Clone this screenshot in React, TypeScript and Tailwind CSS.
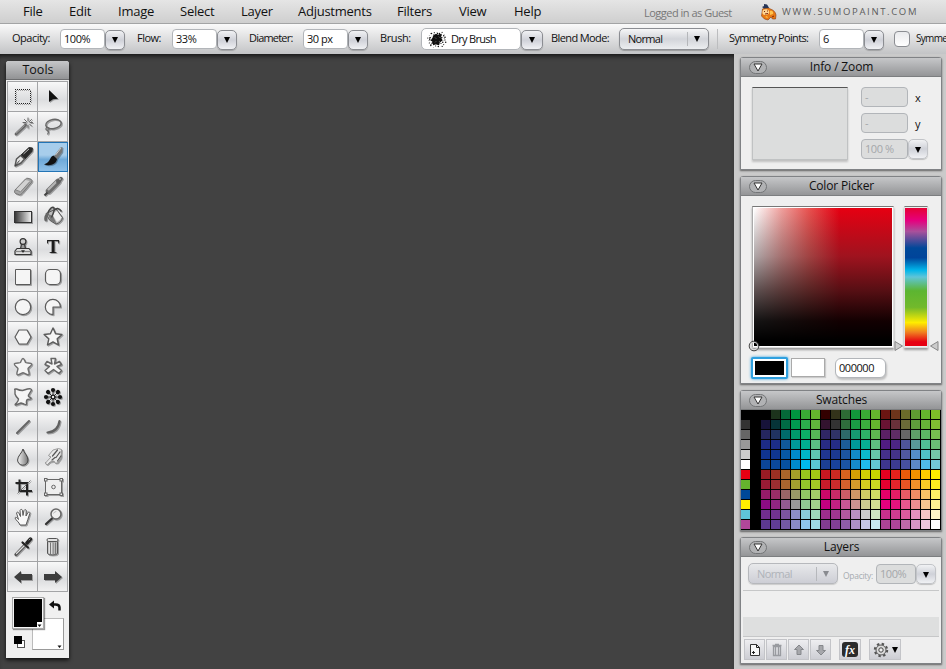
import { ReactNode } from "react";
import clsx from "clsx";

const menuItems = [
    { label: "File", width: "w-[46px]" },
    { label: "Edit", width: "w-[49px]" },
    { label: "Image", width: "w-[62px]" },
    { label: "Select", width: "w-[61px]" },
    { label: "Layer", width: "w-[57px]" },
    { label: "Adjustments", width: "w-[99px]" },
    { label: "Filters", width: "w-[62px]" },
    { label: "View", width: "w-[55px]" },
    { label: "Help", width: "w-[130px]" },
];

// one line per swatch row, 20 colors each
const swatchRows = [
    "000000 000000 000000 1c331c 056839 009540 3aaa35 65b32e 330000 33331a 2d6a35 12973b 3aaa35 65b32e 6b1512 6d351b 6b6b2a 5f9c32 65b32e 7ebc28",
    "333333 000000 17133a 063438 006a45 009a50 2bac4c 60b33c 33132f 333333 2f6c3c 1a9c45 3bac3e 65b32e 691333 69313a 6a6a38 5f9d3c 66b238 80bb32",
    "666666 000000 25265f 203360 006a6a 00996b 0cae66 56b657 302664 303366 2d6969 169970 2eaf67 5eb650 5b2064 5f2c65 666666 5f9f68 5cb664 76bd50",
    "999999 000000 1d2b85 1c2d87 10599a 009999 00ad90 5bbd83 282b83 252c85 1c5d98 009999 07ae94 5ebd80 511c82 4c2584 4f559a 599999 51bd96 6abb75",
    "cccccc 000000 10348f 10368f 0758a5 0089cb 00b4c7 5fc3b0 203690 1c398f 1c55a0 128ac8 0cb8cc 66c4a8 45308a 443388 5158a0 548dca 50bfc4 74c5a6",
    "ffffff 000000 0c4698 0b499b 0751a0 008ace 00b7ee 5ac5d4 1c3f94 19429b 1b54a3 168acb 20baed 63c5d3 3e368d 3c3b90 4750a0 5c88c6 50baea 73c8d8",
    "e60012 000000 991b24 9c3023 a9652a a59f29 98c31e a2c915 c91721 cb2922 d7621f d5a005 d2cf05 c8d600 e60020 e7211c eb5b0b f39200 ffcc00 ffed00",
    "65b32e 000000 991b35 9c2e31 a8652f a2a030 94c32b a4ca25 ca1b2a cb2b2c d6602d d59b2b d6ce20 cbd922 e60030 e4242b e95424 f2912a facb26 ffec20",
    "004899 000000 961b68 9a2d67 9a6566 9a9a67 92c564 a4cd68 cb0868 ca2a67 ce5c66 cf9766 d0cc65 d1dc65 e60068 e51d65 e85b65 f08c65 f8c166 fff066",
    "ffed00 000000 8b0c83 912581 935a92 999999 91ca94 a2d18b c20080 c12082 ca5795 ce9391 cecc91 d4df94 e6007e e5137d e8578d ee8d91 f7c491 fff294",
    "5fc5d8 000000 712e8e 71338f 7c54a0 8c8dc7 8accdb 9ed7ba 9d2d8c a0368f b2589e b88fc0 cccccc cfe5c1 ca308c cf3c8f dc5b9d e591bd f5c3c3 fff5c8",
    "b1479a 000000 5c3990 603d96 7359a4 898ac5 8ec4ec 9edbe5 823c90 813f96 8e5ca6 ad8fc5 c4c5e6 c9eaf0 ab4396 ae4599 be69a7 d796c3 edc4dc ffffff",
];

const outline = { stroke: "#5a5a5a", strokeWidth: 1.2, fill: "#f5f5f5", strokeLinejoin: "round" as const };

const tools: { name: string; icon: ReactNode }[] = [
    { name: "marquee", icon: <path d="M7 7.500h16M7 21.500h16M7.500 9v12M22.500 9v12" fill="none" stroke="#222" strokeWidth="1" strokeDasharray="1 1" shapeRendering="crispEdges" /> },
    { name: "move", icon: <path d="M11 8v12l4-2.800 5-.4z" fill="#111" /> },
    {
        name: "wand",
        icon: (
            <g fill="none" strokeLinecap="round">
                <path d="M8 22 17.500 13" stroke="#666" strokeWidth="2.800" />
                <path d="m8.300 21 8-7.500" stroke="#bbb" strokeWidth=".8" />
                <path d="M20 6v3M20 13v3M15 10.500h3M22 10.500h2.500M16.500 7.500l2 2M23.500 7.500l-2 2M23.500 14l-2-2" stroke="#666" strokeWidth="1" />
            </g>
        ),
    },
    {
        name: "lasso",
        icon: (
            <g fill="none" stroke="#666" strokeWidth="1.500">
                <ellipse cx="15.500" cy="12" rx="7.800" ry="4.600" transform="rotate(-10 15.500 12)" />
                <path d="M9 15c-2 2-1 3.500 1 3 2-.5 1.500-2.500-.5-2.500M9.500 18c1.500 1.500 1 3 0 4.500" strokeWidth="1.200" />
            </g>
        ),
    },
    {
        name: "pen",
        icon: (
            <g strokeLinejoin="round">
                <path d="m13 13 8-7.500 3.500.5-.5 3.500-7 7.500z" fill="#2a2a2a" stroke="#333" />
                <path d="m7 24 1.500-7 4-3.500 4 3.500-3.500 4z" fill="#e2e2e2" stroke="#555" strokeWidth="1.400" />
                <path d="m7 24 4.500-5.500" stroke="#444" />
                <path d="m15.500 12 5.500-5" stroke="#bbb" />
            </g>
        ),
    },
    {
        name: "brush",
        icon: (
            <g>
                <path d="m16 14 6.500-8.500 2-.5-.3 5-5.700 7.500z" fill="#777" />
                <path d="m17.500 13 5.500-7" stroke="#ccc" />
                <path d="M15.500 13.500c-3 .8-3 4-5 6-1.300 1.600-2.500 2-4.500 3 6.500 2 12.500-.5 13-5.500z" fill="#111" />
            </g>
        ),
    },
    {
        name: "eraser",
        icon: (
            <g strokeLinejoin="round">
                <path d="m7 18 10.500-11q1-1 2.500-.7l3 .9q1.300.8.8 2.800L14 21.500q-1.200 1.500-2.500 1.300L7.500 21.500q-1.700-1-.5-3.500z" fill="#a5a5a5" stroke="#777" />
                <path d="m8 17.500 9.500-9.500 4.500 1-10 11z" fill="#d2d2d2" />
                <path d="m12 20.500 10-11M8 18l4 1.500" stroke="#858585" fill="none" />
            </g>
        ),
    },
    {
        name: "pencil",
        icon: (
            <g>
                <path d="m10.500 19 9.500-9.500" stroke="#6c6c6c" strokeWidth="5.500" strokeLinecap="round" />
                <path d="m10 18 8.500-8.500" stroke="#b5b5b5" strokeWidth="2.300" />
                <path d="m20 10 3-3.500" stroke="#606060" strokeWidth="3.500" strokeLinecap="round" />
                <path d="m21.500 7.500 1-1" stroke="#ddd" strokeWidth="1.500" />
                <path d="m6.500 23.500 3-3" stroke="#444" strokeWidth="2.200" />
            </g>
        ),
    },
    { name: "gradient", icon: <rect x="6.500" y="9.500" width="17" height="11" fill="url(#gradTool)" stroke="#333" /> },
    {
        name: "bucket",
        icon: (
            <g strokeLinejoin="round">
                <path d="M8 11.500 18 7l6.500 8.500q-1 5-6.500 6.500l-6.500-4z" fill="#bbb" stroke="#555" />
                <path d="m14 12 5-3 4.500 6.500q-1 3-4.500 4.500z" fill="#eee" />
                <path d="m10 12 5 2 3.500 7.500-6-3z" fill="#777" />
                <path d="M9 13c3-8 6-8.500 7-7 1 2-1 6-2.500 9.500" fill="none" stroke="#444" strokeWidth="1.500" />
                <path d="M16 8.500c2.500-3 5-2.500 7.500 1" fill="none" stroke="#444" strokeWidth="1.500" />
                <path d="M10 10c-3 2-4.500 5-3.500 8.500 1 1.500 2.500 1 2.500-1 0-2 .5-3.500 2-5z" fill="#666" />
            </g>
        ),
    },
    {
        name: "stamp",
        icon: (
            <g stroke="#333" strokeWidth="1.200">
                <path d="M13.500 12h3l1 5h-5z" fill="#999" />
                <circle cx="15" cy="9.500" r="2.900" fill="#ccc" />
                <path d="M9 16.500h12l2 2.500v3.500H7V19z" fill="#ddd" strokeLinejoin="round" />
                <path d="M7.500 19.500h15" stroke="#888" />
                <path d="M13.500 18.500h3L15 20.500z" fill="#111" strokeWidth=".5" />
            </g>
        ),
    },
    { name: "text", icon: <text x="15" y="21" textAnchor="middle" className="font-['Liberation_Serif',serif] text-[19px] font-bold" fill="#1c1c1c">T</text> },
    { name: "square", icon: <rect x="7.500" y="7.500" width="15" height="15" {...outline} strokeWidth="1" /> },
    { name: "rounded", icon: <rect x="7.500" y="7.500" width="15" height="15" rx="4.500" {...outline} /> },
    { name: "ellipse", icon: <circle cx="15" cy="15" r="7.700" {...outline} /> },
    { name: "pie", icon: <path d="M15 15h7.500A7.600 7.600 0 1 0 15 22.600z" {...outline} /> },
    { name: "polygon", icon: <path d="M11 8h8l4 7-4 7h-8l-4-7z" {...outline} /> },
    { name: "star", icon: <path d="m15 6 2.600 5.800 6.300.7-4.700 4.300 1.300 6.200L15 19.900 9.500 23l1.300-6.200-4.700-4.300 6.300-.7z" {...outline} strokeWidth="1.400" /> },
    { name: "smoothstar", icon: <path d="M15 6.500c1 0 1.200 1 2.500 4 .4.8 5.800 0 6.200 1.500.3 1.500-3.500 3.500-3.700 4.700-.1 1.200 2.200 5 .7 6-1.200.8-4.500-2-5.700-2s-4.500 2.800-5.700 2c-1.500-1 .8-4.800.7-6-.2-1.200-4-3.200-3.700-4.700.4-1.500 5.800-.7 6.200-1.500 1.300-3 1.500-4 2.500-4z" {...outline} stroke="#707070" strokeWidth="1.400" /> },
    { name: "asterisk", icon: <path d="M13 6.500h4.500l-1 5.500 5-2.500 2 3-4.500 2 4.500 4-2.500 3-5.500-4-5.500 4-3-3 4.500-4-4.500-2 2-3 5 2.500z" {...outline} stroke="#666" strokeWidth="1.400" /> },
    { name: "freeform", icon: <path d="M7 8q-1-1.500 1.500-1 3 1.500 6 1.500l5-1.500q4-.8 4 1l-3 5q-.5 2 2 2.500 2 1.500-3 2-1.500.5-1 4 0 2-2.500.5l-3-1-5.500 2q-1-.5 1-2 2-2 2-4-3-3-3.500-5z" {...outline} stroke="#666" strokeWidth="1.400" /> },
    {
        name: "symmetry",
        icon: (
            <g fill="#111">
                <circle cx="15" cy="15" r="2.500" />
                <circle cx="15" cy="15" r="1.200" fill="#eee" />
                {[0, 45, 90, 135, 180, 225, 270, 315].map((angle) => (
                    <g key={angle} transform={`rotate(${angle} 15 15)`}>
                        <circle cx="15" cy="8" r="2.100" />
                        <path d="M15 9v4" stroke="#111" strokeWidth=".8" />
                    </g>
                ))}
            </g>
        ),
    },
    { name: "line", icon: <path d="M9 21 21 9" stroke="#666" strokeWidth="2" strokeLinecap="round" /> },
    { name: "curve", icon: <path d="M9.500 20.500C17 20 20.500 16 21.500 9" fill="none" stroke="#606060" strokeWidth="2.200" strokeLinecap="round" /> },
    { name: "blur", icon: <path d="M15 7c1 4 5 7 5 11a5.200 5.200 0 0 1-10.400 0C9.600 14 14 11 15 7z" fill="url(#dropFill)" stroke="#444" /> },
    {
        name: "smudge",
        icon: (
            <g strokeLinejoin="round" strokeLinecap="round">
                <path d="m7.500 21 5.500-6-2.500-1.500L15 8l5.500-1.500 3 1L23 16l-3.500 5H17l-1-2-4 1-2.500 2.500q-2 .5-2-1.500z" fill="#e8e8e8" stroke="#8a8a8a" strokeWidth=".8" />
                <path d="M19.500 8 14.500 14M22 10l-4 5.500M14 18l3-2.500M23 14l-3.500 5" stroke="#555" fill="none" strokeWidth="1.200" />
            </g>
        ),
    },
    {
        name: "crop",
        icon: (
            <g fill="none" stroke="#222" strokeWidth="2">
                <path d="M7.500 11H19v12.500M11.500 7.500v11.500H24" />
                <path d="m9.500 21.500 13-13" strokeWidth=".8" stroke="#555" />
            </g>
        ),
    },
    {
        name: "transform",
        icon: (
            <g fill="#eee" stroke="#666">
                <rect x="7.500" y="7.500" width="16" height="15" />
                <circle cx="15.500" cy="15" r="1.800" />
                <rect x="6.500" y="6.500" width="2.500" height="2.500" />
                <rect x="22" y="6.500" width="2.500" height="2.500" />
                <rect x="6.500" y="21" width="2.500" height="2.500" />
                <rect x="22" y="21" width="2.500" height="2.500" />
            </g>
        ),
    },
    {
        name: "hand",
        icon: (
            <path
                d="M12 23c-1-3-4-4.500-5-7 .5-1.500 2-.5 3.500 1.500L8.500 11c.5-1.500 2-1 2.500.5l1.500 3L12 8.500c.5-1.500 2-1.500 2.500 0l.5 5 1-5c.8-1.500 2.300-1 2.200.5l-.2 5 2-3.500c1-1 2.200-.5 1.800 1l-2 6-1.800 5.500z"
                fill="#f8f8f8" stroke="#5a5a5a" strokeLinejoin="round"
            />
        ),
    },
    {
        name: "zoom",
        icon: (
            <g>
                <path d="m8 22 6-5.500" stroke="#333" strokeWidth="2.300" strokeLinecap="round" />
                <circle cx="18" cy="12" r="5" fill="#eee" stroke="#666" strokeWidth="1.500" />
                <path d="M15.500 11.500q.8-2 2.800-2" stroke="#bbb" fill="none" />
            </g>
        ),
    },
    {
        name: "eyedropper",
        icon: (
            <g strokeLinecap="round">
                <path d="m8 22.500 8.500-9" stroke="#555" strokeWidth="3.200" />
                <path d="m8.500 21.500 8-8" stroke="#ddd" strokeWidth="1.200" />
                <path d="m19 11 3.500-4" stroke="#222" strokeWidth="3.500" />
                <path d="m14.500 10.500 5.500 5" stroke="#222" strokeWidth="2.200" />
                <path d="m21 8 1-1" stroke="#999" />
            </g>
        ),
    },
    {
        name: "clear",
        icon: (
            <g stroke="#555">
                <path d="M9.500 9.500h10v12q-1 1.500-5 1.500t-5-1.500z" fill="#bbb" />
                <path d="M12.500 10.500v12M15 10.500v12M17.500 10.500v12" stroke="#777" />
                <path d="M11.300 11v10.500M13.800 11v11" stroke="#eee" strokeWidth=".9" />
                <rect x="9" y="6.500" width="11" height="3" rx="1.500" fill="#e2e2e2" />
            </g>
        ),
    },
    { name: "undo", icon: <path d="m6 15 7-6v3h11v6H13v3z" fill="#3d3d3d" /> },
    { name: "redo", icon: <path d="m24 15-7-6v3H6v6h11v3z" fill="#3d3d3d" /> },
];

function Caret({ className = "border-t-black" }: { className?: string }) {
    return <span className={clsx("h-0 w-0 border-x-[3.5px] border-t-[6px] border-x-transparent", className)} />;
}

function DropButton({ className, wide }: { className?: string; wide?: boolean }) {
    return (
        <button className={clsx("mt-px flex h-5 shrink-0 items-center justify-center rounded-[5px] border bg-linear-to-b from-[#f1f2f4] via-[#cfd1d8] to-[#f0f1f4] pt-px shadow-[0_1px_1px_rgba(0,0,0,0.2)]", wide ? "w-[22px]" : "w-5", className ?? "border-[#8b8d92]")}>
            <Caret />
        </button>
    );
}

function Field({ value, className }: { value: string; className: string }) {
    return (
        <div className={clsx("flex h-5 shrink-0 items-center rounded-[4px] border border-[#b2b5b9] pl-[3px] text-[11px] leading-none tracking-[-0.45px]", className)}>
            <span className="whitespace-nowrap pb-px">{value}</span>
        </div>
    );
}

function Label({ text, className }: { text: string; className: string }) {
    return <span className={clsx("shrink-0 whitespace-nowrap pb-[3px] text-[11px] leading-none", className)}>{text}</span>;
}

function Panel({ title, className, children }: { title: string; className: string; children: ReactNode }) {
    return (
        <section className={clsx("flex w-[202px] shrink-0 flex-col rounded-t-[3px] border border-[#808285] bg-[#efefef] shadow-[0_1px_2px_rgba(0,0,0,0.5)]", className)}>
            <header className="flex h-[19px] shrink-0 items-center border-b border-[#7c7e80] bg-linear-to-b from-[#c6c7c9] to-[#949597]">
                <span className="ml-2 flex h-[13px] w-[18px] items-center justify-center rounded-full border border-[#737577] bg-[#b1b2b4]">
                    <svg width="10" height="9" viewBox="0 0 10 9"><path d="M1 1h8L5 8z" fill="#fff" stroke="#333" /></svg>
                </span>
                <h2 className="w-[149px] text-center text-[12px] leading-none tracking-[-0.15px]">{title}</h2>
            </header>
            {children}
        </section>
    );
}

function BrushSplat() {
    const dots = Array.from({ length: 60 }, (_, i) => {
        const angle = i * 2.4;
        const radius = 4 + ((i * 37) % 50) / 8;
        return { x: 10 + Math.cos(angle) * radius, y: 10 + Math.sin(angle) * radius * 0.9, r: 0.35 + (i % 3) * 0.22 };
    });
    return (
        <svg width="20" height="19" viewBox="0 0 20 20" className="shrink-0">
            <path d="m6 6 3-2 2 1 4-1-1 4 2 3-3 2-1 3-3-1-3 1-1-4-2-1 2-2z" fill="#111" />
            {dots.map((dot, i) => <circle key={i} cx={dot.x} cy={dot.y} r={dot.r} fill="#111" />)}
            <path d="m8 8 1 1M12 7l1 1M8 13l1-1M12 12h1" stroke="#aaa" strokeWidth=".7" />
        </svg>
    );
}

function SumoLogo() {
    return (
        <svg width="18" height="18" viewBox="0 0 18 18" className="shrink-0">
            <path d="M2.500 6c2-2 6-1.500 8 0 3 1 5 3 5.500 6l-.5 4h-3l-1.500-2-3 3-3.500-1-3-3z" fill="#e87913" stroke="#8a3a13" strokeWidth=".6" />
            <path d="M3 7c2-1 5-1 6 1s-1 4-4 4-3-3-2-5z" fill="#ffd591" />
            <path d="M10 8c2-1 4 1 3 3l-3 1zM5 14l2-1 1 2z" fill="#ffc34c" />
            <path d="m2 4 2-1V1l3 .5L8 3l1 2-5 .500z" fill="#263557" />
            <path d="M4 8.500h1M7 8h1M5 11l3-.5M12 14l2-1" stroke="#7d2410" strokeWidth="1" />
        </svg>
    );
}

function ToolsPanel() {
    return (
        <aside className="mt-[7px] ml-1.5 flex h-[597px] w-[63px] flex-col rounded-t-[3px] bg-[#f0f0f0] shadow-[0_2px_4px_rgba(0,0,0,0.8)]">
            <h2 className="flex h-[19px] shrink-0 items-center justify-center rounded-t-[3px] border-b border-[#6d6e70] bg-linear-to-b from-[#c6c7c9] to-[#929395] pl-px text-[12.5px] leading-none">Tools</h2>
            <div className="mx-px mt-px grid grid-cols-2 border-t border-l border-[#a3a4a6]">
                {tools.map((tool) => (
                    <button
                        key={tool.name}
                        aria-label={tool.name}
                        className={clsx(
                            "h-[30px] w-[30px] border-r border-b",
                            tool.name === "brush"
                                ? "border-[#2374b5] bg-linear-to-b from-[#a7cdeb] from-45% via-[#6fa9d8] via-60% to-[#8fc0e8] outline outline-[#2374b5] -outline-offset-1"
                                : "border-[#a3a4a6] bg-linear-to-b from-[#f8f8f8] via-[#dcdddf] via-60% to-[#f1f1f1]"
                        )}
                    >
                        <svg width="30" height="30" viewBox="0 0 30 30" className="drop-shadow-[1px_1px_0.5px_rgba(0,0,0,0.3)]">{tool.icon}</svg>
                    </button>
                ))}
            </div>
            <div className="relative h-[66px]">
                <div className="absolute top-[26px] left-[26px] h-8 w-8 border border-[#bbb] border-r-[#999] border-b-[#999] bg-white" />
                <div className="absolute top-[5px] left-1.5 h-8 w-8 border border-[#aaa] bg-[#f5f5f5] p-px shadow-[1px_1px_1px_rgba(0,0,0,0.4)]">
                    <div className="h-[28px] w-[28px] bg-black" />
                </div>
                <svg className="absolute inset-0" width="63" height="66" viewBox="0 0 63 66">
                    <path d="M31 30h5v5h-5z" fill="#fff" />
                    <path d="M31.500 32.500h4l-2 2.500zM51.500 53.500h4l-2 2.500z" fill="#111" />
                    <path d="M53.500 18.500v-3q0-3-4-3h-2" fill="none" stroke="#111" strokeWidth="2.500" />
                    <path d="m43 12.500 5-4v8z" fill="#111" />
                    <rect x="11.500" y="48.500" width="7" height="7" fill="#fff" stroke="#555" />
                    <rect x="8" y="44" width="8" height="8" fill="#000" />
                </svg>
            </div>
        </aside>
    );
}

function InfoPanel() {
    return (
        <Panel title="Info / Zoom" className="h-[113px]">
            <div className="flex pt-2.5 pl-[11px]">
                <div className="h-[73px] w-24 border border-[#c0c2c3] border-t-[#555] bg-[#dcdddd] shadow-[0_2px_2px_rgba(0,0,0,0.2)]" />
                <div className="ml-[13px] flex flex-col gap-1.5 text-[11px]">
                    <div className="flex items-center">
                        <Field value="-" className="w-[47px] bg-[#dcdddd] text-[#a4a7aa]" />
                        <span className="ml-[7px] leading-none">x</span>
                    </div>
                    <div className="flex items-center">
                        <Field value="-" className="w-[47px] bg-[#dcdddd] text-[#a4a7aa]" />
                        <span className="ml-[7px] leading-none">y</span>
                    </div>
                    <div className="-mt-px flex items-center">
                        <Field value="100 %" className="w-[47px] bg-[#dcdddd] text-[#a4a7aa]" />
                        <DropButton className="border-[#c2c4c8]" />
                    </div>
                </div>
            </div>
        </Panel>
    );
}

function ColorPickerPanel() {
    return (
        <Panel title="Color Picker" className="mt-[6px] h-[208px]">
            <div className="relative flex pt-2.5 pl-[11px]">
                <div className="h-[142px] w-[142px] border border-[#ddd] border-t-[#777] border-l-[#aaa] bg-white p-px shadow-[0_2px_2px_rgba(0,0,0,0.35)]">
                    <div className="h-[138px] w-[138px] bg-[linear-gradient(to_bottom,transparent,rgba(60,45,48,0.42)_35%,rgba(35,20,20,0.74)_60%,rgba(0,0,0,0.92)_82%,#000_96%),linear-gradient(to_right,#fff,#f0a09d_20%,#e9514f_40%,#e60012_62%)]" />
                </div>
                <div className="ml-2.5 h-[142px] w-6 border border-[#ddd] border-t-[#777] py-px shadow-[0_2px_2px_rgba(0,0,0,0.35)]">
                    <div className="h-[138px] w-full bg-[linear-gradient(to_bottom,#e60033,#e6007e_9%,#a9509b_17%,#004899_29%,#00449a_36%,#00b5ea_45%,#5fc5d8_50%,#5cb531_60%,#72b92b_72%,#ffed00_83%,#f08020_90%,#e60012_97%)]" />
                </div>
                <svg className="absolute top-[143px] left-[6px]" width="14" height="14" viewBox="0 0 14 14">
                    <circle cx="7" cy="7" r="4.800" fill="none" stroke="#333" />
                    <circle cx="7" cy="7" r="3.800" fill="none" stroke="#ddd" />
                </svg>
                <svg className="absolute top-[145px] left-[153px]" width="45" height="10" viewBox="0 0 45 10">
                    <path d="M1 .5 8.500 5 1 9.500zM44 .5 36.500 5 44 9.500z" fill="#ccc" stroke="#888" />
                </svg>
            </div>
            <div className="mt-[10px] flex pl-2.5">
                <div className="-mt-px h-[22px] w-[37px] rounded-[2px] border-2 border-[#2fa0df] bg-white p-[2px] shadow-[0_0_3px_#2fa0df]"><div className="h-full bg-black" /></div>
                <div className="ml-[3px] h-[19px] w-[34px] border border-[#aaa] bg-white shadow-[1px_1px_1px_rgba(0,0,0,0.15)]" />
                <Field value="000000" className="ml-2.5 w-[51px] rounded-[6px] bg-white shadow-[1px_2px_2px_rgba(0,0,0,0.2)]" />
            </div>
        </Panel>
    );
}

function SwatchesPanel() {
    return (
        <Panel title="Swatches" className="mt-[6px] h-[141px]">
            <div className="grid grid-cols-20 bg-black">
                {swatchRows.flatMap((row) => row.split(" ")).map((color, i) => (
                    <div key={i} className="h-2.5 border-r border-b border-black" style={{ backgroundColor: `#${color}` }} />
                ))}
            </div>
        </Panel>
    );
}

function LayerButton({ className, children }: { className: string; children: ReactNode }) {
    return (
        <button className={clsx("flex h-[21px] shrink-0 items-center justify-center border border-[#c3c4c8] bg-linear-to-b from-[#eeeef0] to-[#cdced4]", className)}>
            {children}
        </button>
    );
}

function LayersPanel() {
    return (
        <Panel title="Layers" className="mt-[6px] h-[127px]">
            <div className="mx-0.5 flex h-[34px] items-center border-b border-[#c6c7c8] pl-[5px]">
                <div className="flex h-[21px] w-[90px] items-center rounded-[5px] border border-[#b6b8bc] bg-linear-to-b from-[#e8e9eb] to-[#cdced5] pl-2 text-[11px] leading-none tracking-[-0.6px] text-[#afb3b9] shadow-[0_1px_1px_rgba(0,0,0,0.15)]">
                    <span className="w-[59px] pb-px">Normal</span>
                    <span className="h-3.5 w-px bg-[#b6b8bc]" />
                    <Caret className="ml-1.5 border-t-[#898b90]" />
                </div>
                <span className="ml-[5px] w-[33px] pt-1.5 text-[8.5px] leading-none tracking-[-0.3px] text-[#a6abb0]">Opacity:</span>
                <Field value="100%" className="w-10 bg-[#dcdddd] text-[#a4a7aa]" />
                <DropButton className="border-[#c2c4c8]" />
            </div>
            <div className="mx-0.5 h-[26px]" />
            <div className="mx-0.5 h-5 border-b border-[#c6c7c8] bg-[#dedfdf]" />
            <div className="flex pt-[2px] pl-[3px]">
                <LayerButton className="w-[21px]">
                    <svg width="14" height="16" viewBox="0 0 14 16"><path d="M2.500 2.500h6l3 3v8h-9z" fill="#f7f7f7" stroke="#333" /><path d="M8.500 2.500v3h3M5.500 9v3M4 10.500h3" fill="none" stroke="#222" /></svg>
                </LayerButton>
                <LayerButton className="ml-px w-[21px]">
                    <svg width="12" height="16" viewBox="0 0 12 16"><path d="M1.500 3.500h9M2.500 4.500h7v9h-7zM4.500 5v8M7.500 5v8M4 2.500h4" fill="none" stroke="#999ba0" strokeWidth="1.300" /></svg>
                </LayerButton>
                <LayerButton className="ml-px w-[21px]">
                    <svg width="12" height="14" viewBox="0 0 12 14"><path d="m6 2 4.500 4.500H8v5H4v-5H1.500z" fill="#a6a7ab" stroke="#85878b" /></svg>
                </LayerButton>
                <LayerButton className="ml-px w-[21px]">
                    <svg width="12" height="14" viewBox="0 0 12 14"><path d="m6 12 4.500-4.500H8v-5H4v5H1.500z" fill="#a6a7ab" stroke="#85878b" /></svg>
                </LayerButton>
                <LayerButton className="ml-2 w-[22px]">
                    <span className="flex h-[15px] w-4 items-center justify-center rounded-[3px] bg-[#2b2b2b] font-['Liberation_Serif',serif] text-[12px] leading-none font-bold text-white italic">fx</span>
                </LayerButton>
                <LayerButton className="ml-2 w-8 gap-[3px]">
                    <svg width="16" height="16" viewBox="0 0 16 16">
                        <circle cx="8" cy="8" r="6.200" fill="none" stroke="#555" strokeWidth="2" strokeDasharray="2.430 2.430" />
                        <circle cx="8" cy="8" r="5" fill="#ddd" stroke="#555" />
                        <circle cx="8" cy="8" r="2.200" fill="#eee" stroke="#444" />
                    </svg>
                    <Caret />
                </LayerButton>
            </div>
        </Panel>
    );
}

export default function App() {
    return (
        <div className="flex h-[669px] w-[946px] flex-col overflow-hidden bg-[#424242] font-['Open_Sans',sans-serif] text-[#111]">
            <svg width="0" height="0" className="absolute">
                <defs>
                    <linearGradient id="gradTool"><stop stopColor="#333" /><stop offset="1" stopColor="#f4f4f4" /></linearGradient>
                    <linearGradient id="dropFill"><stop stopColor="#f4f4f4" /><stop offset="1" stopColor="#777" /></linearGradient>
                </defs>
            </svg>
            <nav className="flex h-6 shrink-0 items-center border-b border-[#a3a4a5] bg-linear-to-b from-[#e5e5e5] to-[#cfcfcf] pl-[23px]">
                {menuItems.map((item) => (
                    <span key={item.label} className={clsx("shrink-0 text-[13px] leading-none tracking-[-0.25px]", item.width)}>{item.label}</span>
                ))}
                <span className="w-[116px] shrink-0 whitespace-nowrap pt-px text-[11px] leading-none tracking-[-0.5px] text-[#777]">Logged in as Guest</span>
                <SumoLogo />
                <span className="ml-1 whitespace-nowrap text-[9.5px] leading-none tracking-[1.65px] text-[#5c5c5c]">WWW.SUMOPAINT.COM</span>
            </nav>
            <div className="flex h-[30px] shrink-0 items-center bg-linear-to-b from-[#fafafa] to-[#c3c4c6] pl-3">
                <Label text="Opacity:" className="w-12 tracking-[-0.5px]" />
                <Field value="100%" className="w-[45px] bg-white" />
                <DropButton />
                <Label text="Flow:" className="ml-3 w-[35px] tracking-[-0.5px]" />
                <Field value="33%" className="w-[45px] bg-white" />
                <DropButton />
                <Label text="Diameter:" className="ml-3 w-[54px] tracking-[-0.8px]" />
                <Field value="30 px" className="w-[45px] bg-white" />
                <DropButton />
                <Label text="Brush:" className="ml-3 w-[41px] tracking-[-0.4px]" />
                <div className="flex h-[22px] w-[100px] shrink-0 items-center rounded-[5px] border border-[#b2b5b9] bg-white pl-[5px] text-[11px] leading-none tracking-[-0.7px]">
                    <BrushSplat />
                    <span className="ml-1 whitespace-nowrap pb-px">Dry Brush</span>
                </div>
                <DropButton wide />
                <Label text="Blend Mode:" className="ml-2 w-[68px] tracking-[-0.6px]" />
                <div className="flex h-[22px] w-[90px] shrink-0 items-center rounded-[5px] border border-[#8b8d92] bg-linear-to-b from-[#f6f6f7] via-[#d3d5da] to-[#eceef0] pl-2 text-[11px] leading-none tracking-[-0.7px] shadow-[0_1px_1px_rgba(0,0,0,0.25)]">
                    <span className="w-[59px] pb-px">Normal</span>
                    <span className="h-3.5 w-px bg-[#b5b7ba]" />
                    <Caret className="ml-1.5 border-t-black" />
                </div>
                <span className="ml-2 h-5 w-px shrink-0 bg-[#bcbdbf]" />
                <Label text="Symmetry Points:" className="ml-[11px] w-[90px] tracking-[-0.65px]" />
                <Field value="6" className="w-[45px] bg-white" />
                <DropButton />
                <span className="ml-2.5 h-4 w-4 shrink-0 rounded-[4px] border border-[#8b8d92] bg-linear-to-b from-[#e9eaec] to-white" />
                <Label text="Symme" className="ml-1.5 text-[10px]! tracking-[-0.7px]" />
            </div>
            <div className="flex min-h-0 flex-1">
                <main className="flex w-[734px] items-start shadow-[inset_0_5px_5px_-3px_rgba(0,0,0,0.7)]">
                    <ToolsPanel />
                </main>
                <div className="flex w-[212px] flex-col items-start bg-[#cacaca] pt-[3px] pl-1.5">
                    <InfoPanel />
                    <ColorPickerPanel />
                    <SwatchesPanel />
                    <LayersPanel />
                </div>
            </div>
        </div>
    );
}
